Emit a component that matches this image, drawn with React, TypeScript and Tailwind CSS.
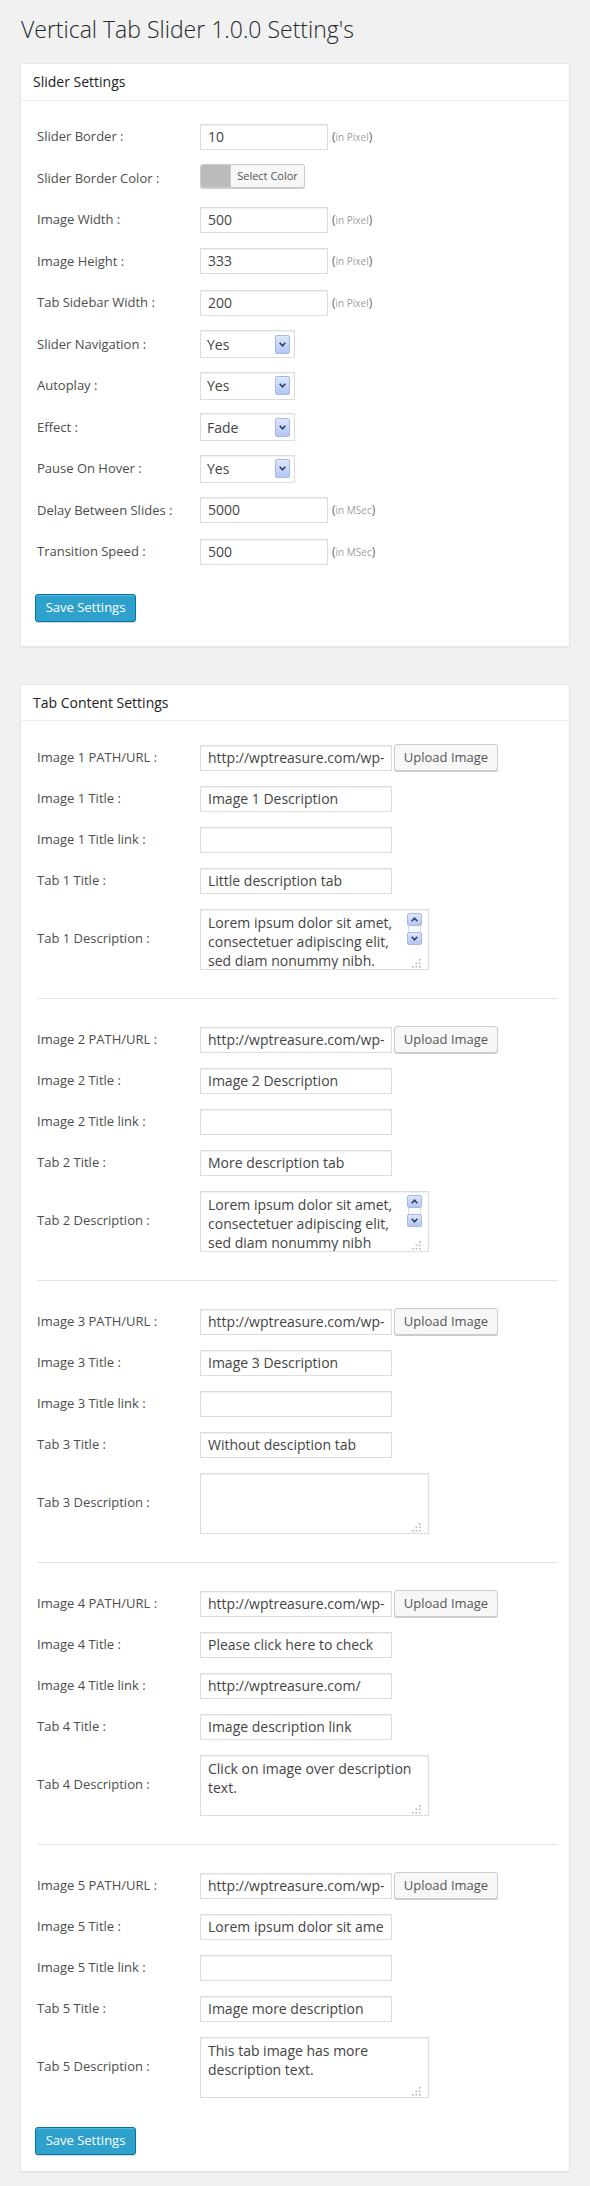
import React from "react";

const inputCls =
  "h-[26px] border border-[#ddd] bg-white shadow-[inset_0_1px_2px_rgba(0,0,0,0.07)] px-[7px] text-[14px] leading-[24px] text-[#444] overflow-hidden whitespace-nowrap";

function Label({ children }: { children: React.ReactNode }) {
  return <div className="w-[163px] shrink-0 text-[13px] text-[#4d4d4d]">{children}</div>;
}

function Chevron({ up = false }: { up?: boolean }) {
  return (
    <svg width="7" height="5" viewBox="0 0 7 5">
      <polyline
        points={up ? "0.7,4.2 3.5,1.2 6.3,4.2" : "0.7,0.8 3.5,3.8 6.3,0.8"}
        fill="none"
        stroke="#2d3d63"
        strokeWidth="1.6"
      />
    </svg>
  );
}

function ArrowBox({ h = 19, up = false }: { h?: number; up?: boolean }) {
  return (
    <div
      className={`${h === 19 ? "h-[19px]" : "h-[13px]"} w-[15px] shrink-0 rounded-[2px] border border-[#a7b9e3] bg-linear-to-b from-[#dde7fd] to-[#b2c6f5] flex items-center justify-center`}
    >
      <Chevron up={up} />
    </div>
  );
}

function Unit({ text }: { text: string }) {
  return (
    <span className="ml-[4px] text-[10px] leading-[14px] text-[#a0a0a0]">
      <span className="text-[12px] text-[#666]">(</span>
      {text}
      <span className="text-[12px] text-[#666]">)</span>
    </span>
  );
}

function SRow({ label, children }: { label: string; children: React.ReactNode }) {
  return (
    <div className="flex items-center h-[41.5px]">
      <Label>{label}</Label>
      {children}
    </div>
  );
}

function Select({ value }: { value: string }) {
  return (
    <div className="h-[28px] w-[95px] border border-[#ddd] bg-white shadow-[inset_0_1px_2px_rgba(0,0,0,0.07)] flex items-center pl-[6px] pr-[4px] text-[14px] text-[#444]">
      <span className="flex-1">{value}</span>
      <ArrowBox />
    </div>
  );
}

function Grip() {
  return (
    <svg width="12" height="10" viewBox="0 0 12 10" className="absolute right-[6px] bottom-[1px]">
      <rect x="9" y="1" width="1.6" height="1.6" fill="#b5b5b5" />
      <rect x="9" y="4.5" width="1.6" height="1.6" fill="#b5b5b5" />
      <rect x="5.5" y="4.5" width="1.6" height="1.6" fill="#b5b5b5" />
      <rect x="9" y="8" width="1.6" height="1.6" fill="#b5b5b5" />
      <rect x="5.5" y="8" width="1.6" height="1.6" fill="#b5b5b5" />
      <rect x="2" y="8" width="1.6" height="1.6" fill="#b5b5b5" />
    </svg>
  );
}

type Group = {
  n: number;
  path: string;
  title: string;
  link: string;
  tab: string;
  desc: string[];
  scroll: boolean;
};

const groups: Group[] = [
  {
    n: 1,
    path: "http://wptreasure.com/wp-",
    title: "Image 1 Description",
    link: "",
    tab: "Little description tab",
    desc: ["Lorem ipsum dolor sit amet,", "consectetuer adipiscing elit,", "sed diam nonummy nibh."],
    scroll: true,
  },
  {
    n: 2,
    path: "http://wptreasure.com/wp-",
    title: "Image 2 Description",
    link: "",
    tab: "More description tab",
    desc: ["Lorem ipsum dolor sit amet,", "consectetuer adipiscing elit,", "sed diam nonummy nibh"],
    scroll: true,
  },
  {
    n: 3,
    path: "http://wptreasure.com/wp-",
    title: "Image 3 Description",
    link: "",
    tab: "Without desciption tab",
    desc: [],
    scroll: false,
  },
  {
    n: 4,
    path: "http://wptreasure.com/wp-",
    title: "Please click here to check",
    link: "http://wptreasure.com/",
    tab: "Image description link",
    desc: ["Click on image over description", "text."],
    scroll: false,
  },
  {
    n: 5,
    path: "http://wptreasure.com/wp-",
    title: "Lorem ipsum dolor sit ame",
    link: "",
    tab: "Image more description",
    desc: ["This tab image has more", "description text."],
    scroll: false,
  },
];

function TRow({ label, children }: { label: string; children: React.ReactNode }) {
  return (
    <div className="flex items-center h-[41px]">
      <Label>{label}</Label>
      {children}
    </div>
  );
}

function GroupBlock({ g }: { g: Group }) {
  return (
    <div>
      <TRow label={`Image ${g.n} PATH/URL :`}>
        <div className={`${inputCls} w-[192px] pr-0`}>{g.path}</div>
        <div className="ml-[2px] h-[27px] w-[104px] rounded-[3px] border border-[#ccc] bg-[#f7f7f7] shadow-[0_1px_0_#ccc] flex items-center justify-center text-[13px] text-[#555]">
          Upload Image
        </div>
      </TRow>
      <TRow label={`Image ${g.n} Title :`}>
        <div className={`${inputCls} w-[192px] pr-0`}>{g.title}</div>
      </TRow>
      <TRow label={`Image ${g.n} Title link :`}>
        <div className={`${inputCls} w-[192px] pr-0`}>{g.link}</div>
      </TRow>
      <TRow label={`Tab ${g.n} Title :`}>
        <div className={`${inputCls} w-[192px] pr-0`}>{g.tab}</div>
      </TRow>
      <div className="flex items-center h-[76px]">
        <Label>{`Tab ${g.n} Description :`}</Label>
        <div className="relative h-[61px] w-[229px] border border-[#ddd] bg-white shadow-[inset_0_1px_2px_rgba(0,0,0,0.07)] overflow-hidden pl-[7px] pt-[3px] text-[14px] leading-[19px] text-[#444]">
          {g.desc.map((l, i) => (
            <div key={i} className="whitespace-nowrap">
              {l}
            </div>
          ))}
          {g.scroll && (
            <div className="absolute right-[6px] top-[3px] flex flex-col w-[15px]">
              <ArrowBox h={13} up />
              <div className="h-[6px] mx-[1px] border-x border-[#d5dcec] bg-[#fafbfe]" />
              <ArrowBox h={13} />
            </div>
          )}
          <Grip />
        </div>
      </div>
    </div>
  );
}

export default function App() {
  return (
    <div className="min-h-screen bg-[#f1f1f1] font-['Open_Sans',sans-serif] pt-[15px] pb-[16px]">
      <h2 className="ml-[21px] text-[23px] leading-[29px] font-light text-[#23282d]">
        Vertical Tab Slider 1.0.0 Setting's
      </h2>

      <div className="mx-[20px] mt-[19px] bg-white border border-[#e5e5e5] shadow-[0_1px_1px_rgba(0,0,0,0.04)]">
        <h3 className="px-[12px] py-[8px] text-[14px] leading-[19.6px] text-[#222] border-b border-[#eee]">
          Slider Settings
        </h3>
        <div className="pl-[16px] pr-[11px] pt-[15.5px] pb-[24px]">
          <SRow label="Slider Border :">
            <div className={`${inputCls} w-[128px]`}>10</div>
            <Unit text="in Pixel" />
          </SRow>
          <SRow label="Slider Border Color :">
            <div className="self-start mt-[6.5px] flex h-[24px] w-[105px] rounded-[3px] border border-[#ccc] bg-[#f7f7f7] shadow-[0_1px_0_#ccc] overflow-hidden">
              <div className="w-[30px] bg-[#bbbbbb] border-r border-[#ccc]" />
              <div className="flex-1 flex items-center justify-center text-[11px] text-[#555]">
                Select Color
              </div>
            </div>
          </SRow>
          <SRow label="Image Width :">
            <div className={`${inputCls} w-[128px]`}>500</div>
            <Unit text="in Pixel" />
          </SRow>
          <SRow label="Image Height :">
            <div className={`${inputCls} w-[128px]`}>333</div>
            <Unit text="in Pixel" />
          </SRow>
          <SRow label="Tab Sidebar Width :">
            <div className={`${inputCls} w-[128px]`}>200</div>
            <Unit text="in Pixel" />
          </SRow>
          <SRow label="Slider Navigation :">
            <Select value="Yes" />
          </SRow>
          <SRow label="Autoplay :">
            <Select value="Yes" />
          </SRow>
          <SRow label="Effect :">
            <Select value="Fade" />
          </SRow>
          <SRow label="Pause On Hover :">
            <Select value="Yes" />
          </SRow>
          <SRow label="Delay Between Slides :">
            <div className={`${inputCls} w-[128px]`}>5000</div>
            <Unit text="in MSec" />
          </SRow>
          <SRow label="Transition Speed :">
            <div className={`${inputCls} w-[128px]`}>500</div>
            <Unit text="in MSec" />
          </SRow>
          <button className="mt-[21px] ml-[-2px] h-[28px] w-[101px] rounded-[3px] border border-[#0074a2] bg-[#2ea2cc] text-[13px] text-white shadow-[inset_0_1px_0_rgba(120,200,230,0.5),0_1px_0_rgba(0,0,0,0.15)]">
            Save Settings
          </button>
        </div>
      </div>

      <div className="mx-[20px] mt-[37px] bg-white border border-[#e5e5e5] shadow-[0_1px_1px_rgba(0,0,0,0.04)]">
        <h3 className="px-[12px] py-[8px] text-[14px] leading-[19.6px] text-[#222] border-b border-[#eee]">
          Tab Content Settings
        </h3>
        <div className="pl-[16px] pr-[11px] pt-[16px] pb-[16px]">
          {groups.map((g, i) => (
            <React.Fragment key={g.n}>
              {i > 0 && <div className="h-px bg-[#e3e3e3] my-[20.5px]" />}
              <GroupBlock g={g} />
            </React.Fragment>
          ))}
          <button className="mt-[21.5px] ml-[-2px] h-[28px] w-[101px] rounded-[3px] border border-[#0074a2] bg-[#2ea2cc] text-[13px] text-white shadow-[inset_0_1px_0_rgba(120,200,230,0.5),0_1px_0_rgba(0,0,0,0.15)]">
            Save Settings
          </button>
        </div>
      </div>
    </div>
  );
}
